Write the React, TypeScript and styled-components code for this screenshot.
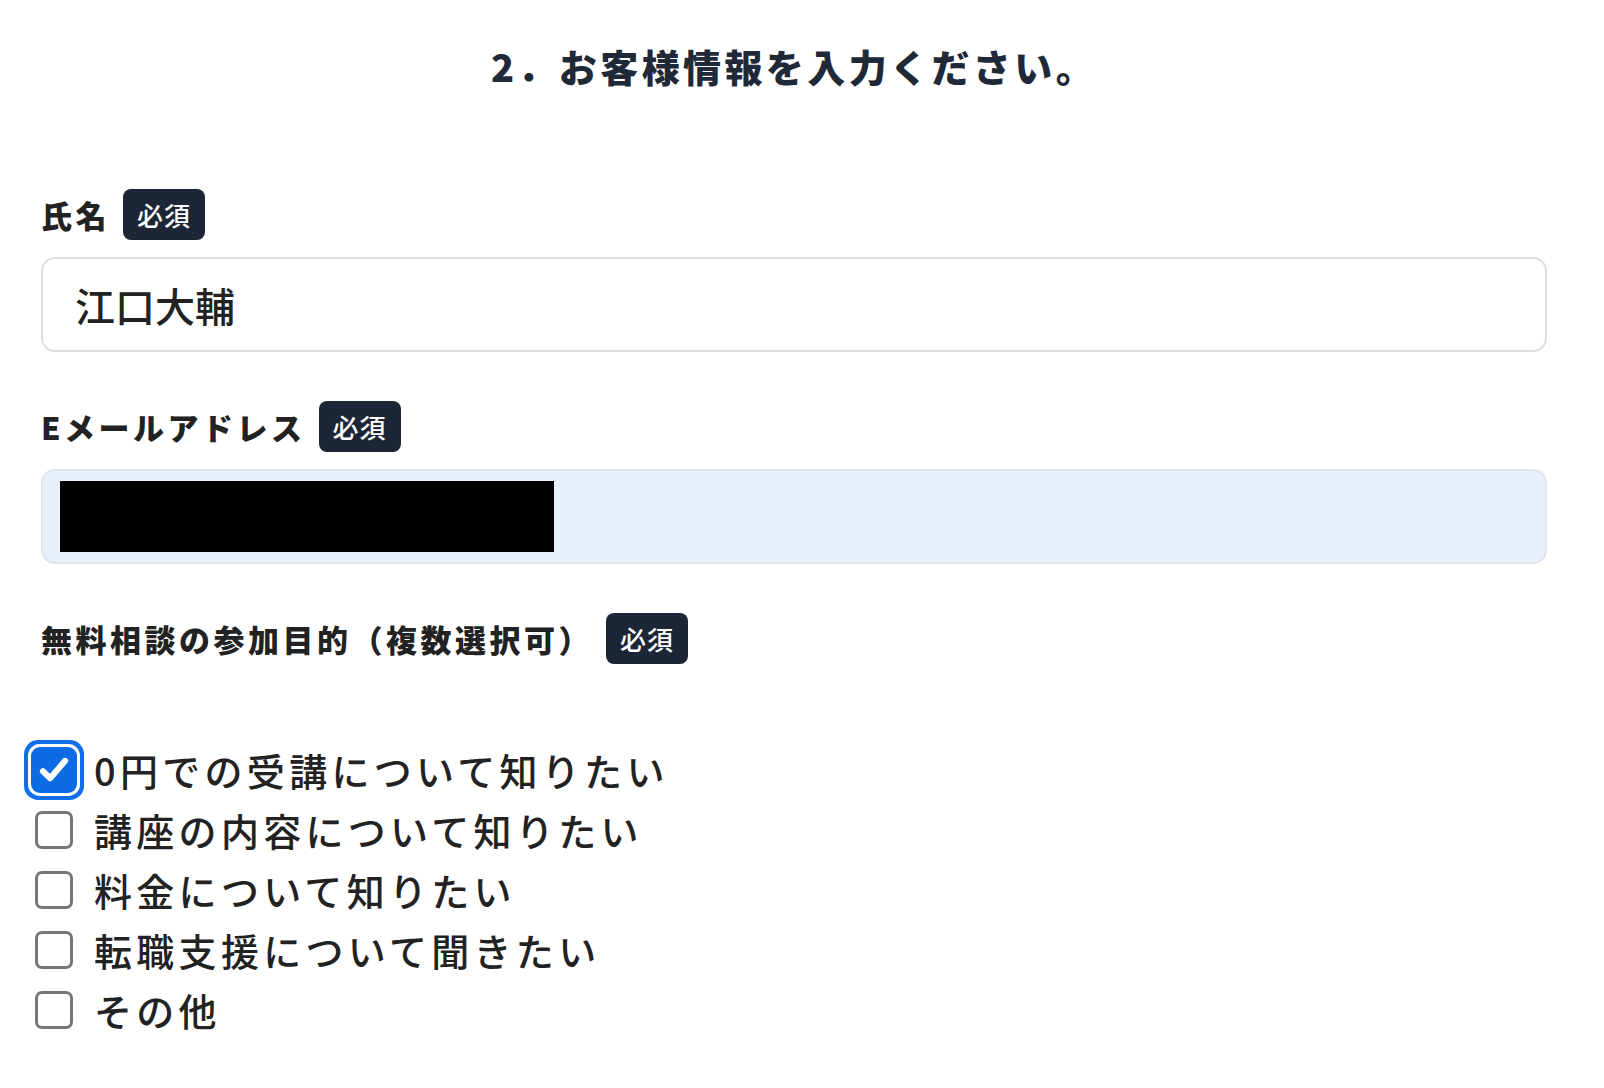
import React from "react";
import styled, { createGlobalStyle, css } from "styled-components";

const GlobalStyle = createGlobalStyle`
  html, body {
    margin: 0;
    padding: 0;
    background: #ffffff;
  }
  body {
    font-family: "Noto Sans CJK JP", "Noto Sans", "Liberation Sans", sans-serif;
    color: #222222;
  }
  * { box-sizing: border-box; }
`;

const Page = styled.div`
  padding: 45px 57px 0 41px;
`;

const Title = styled.h2`
  margin: 0;
  text-align: center;
  font-size: 38px;
  line-height: 42px;
  font-weight: 900;
  letter-spacing: 3.4px;
  color: #1f2937;
`;

const Form = styled.form`
  margin-top: 102px;
  display: flex;
  flex-direction: column;
  gap: 49px;
`;

const Field = styled.div`
  display: flex;
  flex-direction: column;
  gap: 17px;
`;

const LabelRow = styled.div`
  display: flex;
  align-items: center;
  gap: 13px;
  height: 51px;
`;

const Label = styled.label`
  font-size: 31px;
  line-height: 1;
  font-weight: 900;
  letter-spacing: 3.5px;
  color: #222222;
`;

const Badge = styled.span`
  display: inline-flex;
  align-items: center;
  justify-content: center;
  width: 82px;
  height: 51px;
  border-radius: 8px;
  background: #1d2636;
  color: #ffffff;
  font-size: 26px;
  font-weight: 500;
  letter-spacing: 1px;
`;

const InputShell = styled.div<{ $autofill?: boolean }>`
  height: 95px;
  border: 2px solid #dedede;
  border-radius: 14px;
  display: flex;
  align-items: center;
  padding-left: 32px;
  font-size: 40px;
  font-weight: 500;
  color: #222222;
  background: #ffffff;
  ${(p) =>
    p.$autofill &&
    css`
      background: #e8f0fe;
      border-color: #dfe5ee;
      padding-left: 17px;
    `}
`;

const Redacted = styled.span`
  display: block;
  width: 494px;
  height: 71px;
  background: #000000;
`;

const CheckList = styled.div`
  margin-top: 59px;
  margin-left: -6px;
  display: flex;
  flex-direction: column;
`;

const CheckRow = styled.label`
  display: flex;
  align-items: center;
  gap: 21px;
  height: 60px;
  cursor: pointer;
`;

const Box = styled.span<{ $checked?: boolean }>`
  flex: none;
  width: 38px;
  height: 38px;
  border-radius: 7px;
  border: 3px solid #767676;
  background: #ffffff;
  display: inline-flex;
  align-items: center;
  justify-content: center;
  ${(p) =>
    p.$checked &&
    css`
      border: none;
      background: #0c6ce6;
      border-radius: 5px;
      box-shadow: 0 0 0 4px #0c6ce6, 0 0 0 7px #ffffff, 0 0 0 11px #0f6fe8;
    `}
`;

const CheckText = styled.span`
  font-size: 38px;
  line-height: 1;
  font-weight: 500;
  letter-spacing: 4.3px;
  color: #222222;
`;

const options = [
  { label: "0円での受講について知りたい", checked: true },
  { label: "講座の内容について知りたい", checked: false },
  { label: "料金について知りたい", checked: false },
  { label: "転職支援について聞きたい", checked: false },
  { label: "その他", checked: false },
];

const CheckIcon = () => (
  <svg width="38" height="38" viewBox="0 0 24 24" fill="none">
    <path
      d="M5 12.8 L9.6 17.2 L19 6.2"
      stroke="#ffffff"
      strokeWidth="3.8"
      strokeLinecap="round"
      strokeLinejoin="round"
    />
  </svg>
);

export default function App() {
  return (
    <>
      <GlobalStyle />
      <Page>
        <Title>2．お客様情報を入力ください。</Title>
        <Form onSubmit={(e) => e.preventDefault()}>
          <Field>
            <LabelRow>
              <Label>氏名</Label>
              <Badge>必須</Badge>
            </LabelRow>
            <InputShell>江口大輔</InputShell>
          </Field>
          <Field>
            <LabelRow>
              <Label>Eメールアドレス</Label>
              <Badge>必須</Badge>
            </LabelRow>
            <InputShell $autofill>
              <Redacted />
            </InputShell>
          </Field>
          <Field>
            <LabelRow>
              <Label>無料相談の参加目的（複数選択可）</Label>
              <Badge>必須</Badge>
            </LabelRow>
            <CheckList>
              {options.map((o) => (
                <CheckRow key={o.label}>
                  <Box $checked={o.checked}>{o.checked && <CheckIcon />}</Box>
                  <CheckText>{o.label}</CheckText>
                </CheckRow>
              ))}
            </CheckList>
          </Field>
        </Form>
      </Page>
    </>
  );
}
